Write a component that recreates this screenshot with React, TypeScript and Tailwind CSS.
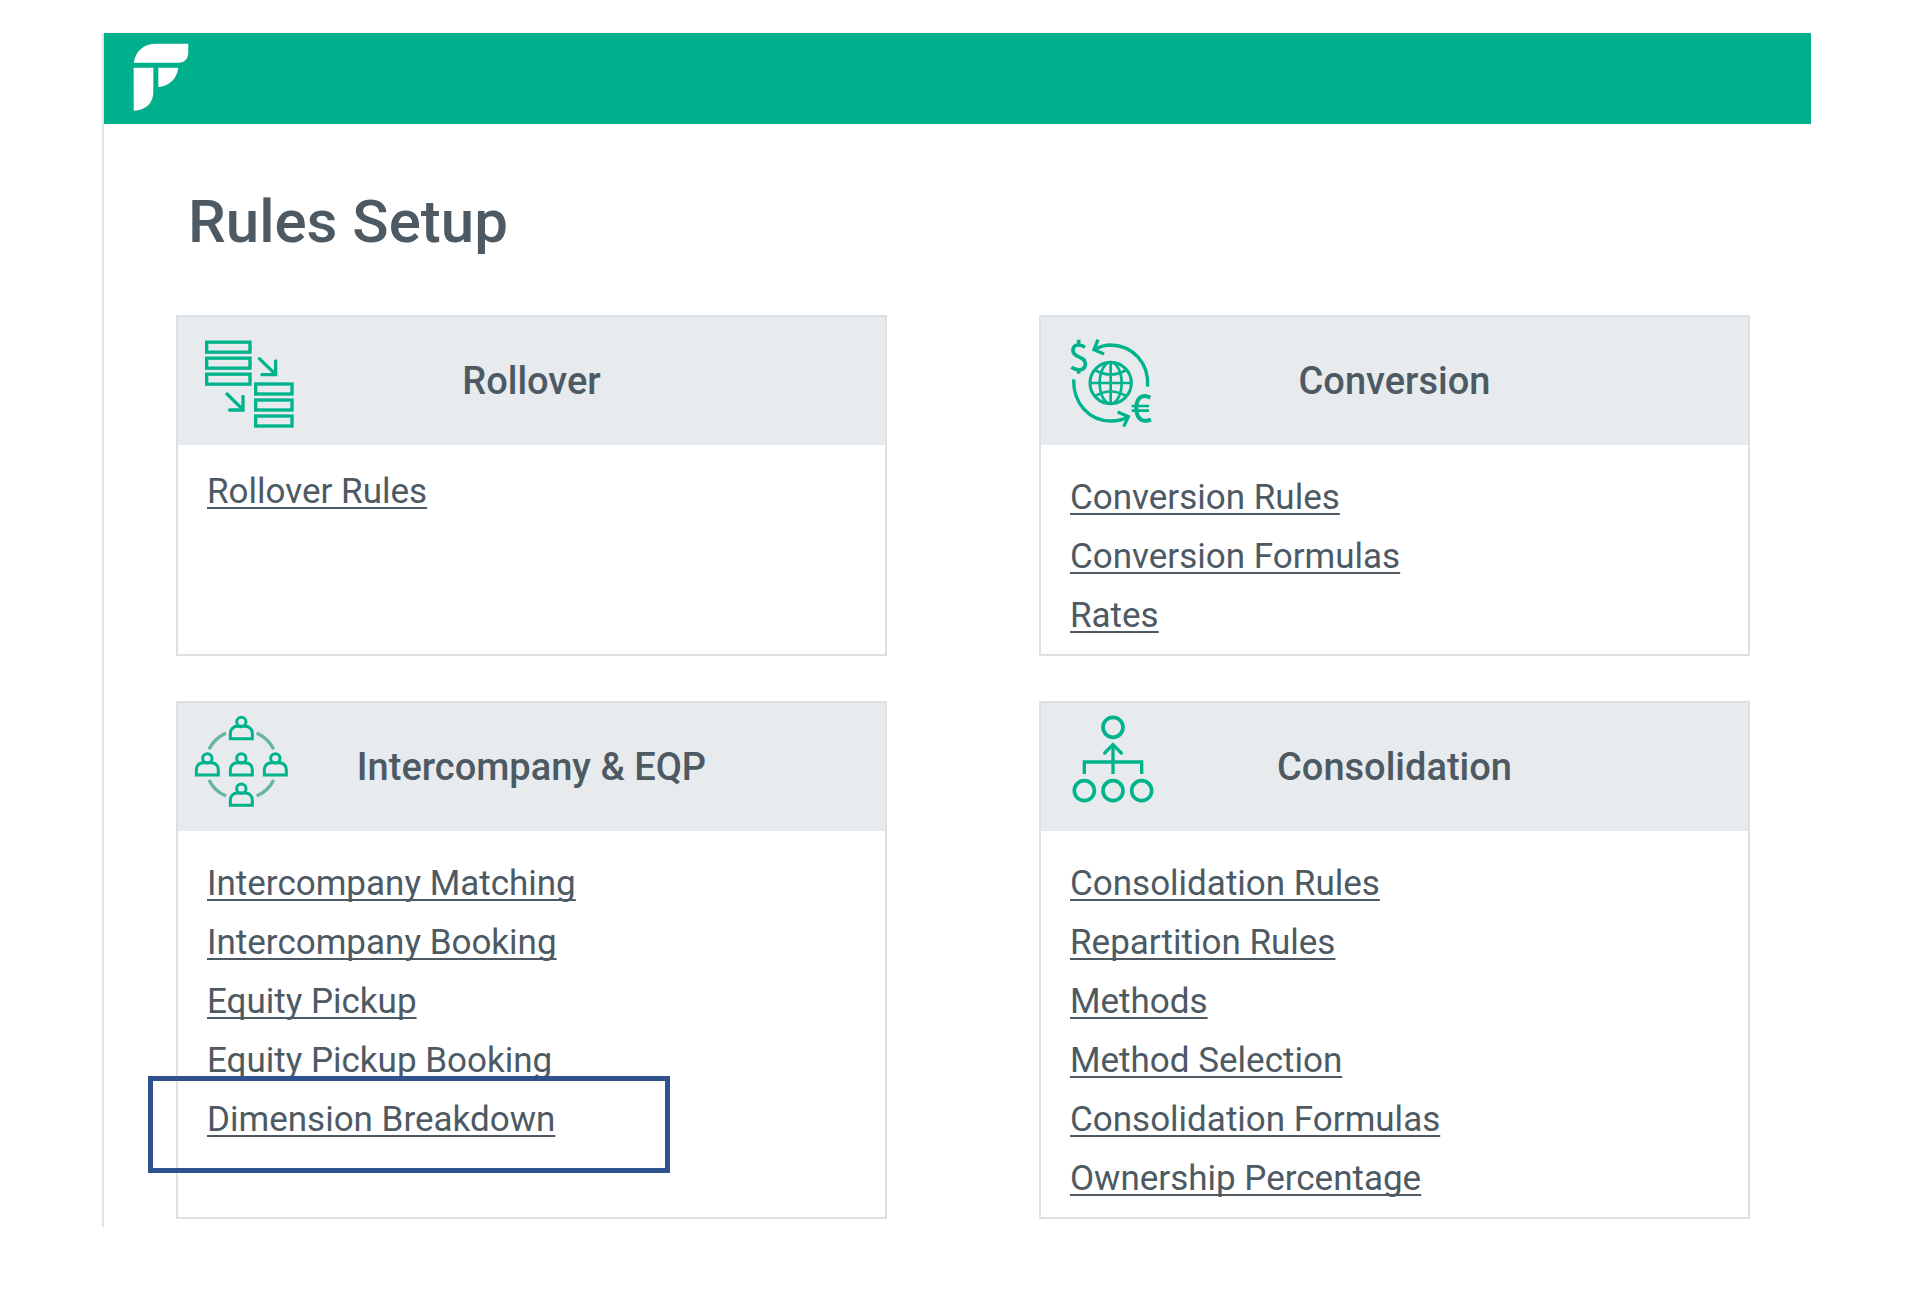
import type { ReactNode } from 'react';

const GREEN = '#00b38c';

function Logo() {
  return (
    <svg viewBox="0 0 168 204" className="h-[68px] w-[56px]" fill="#fff" aria-label="Home" role="img">
      <path d="M2 59 C8 22 34 2 68 2 H166 V26 C166 46 156 59 136 59 Z" />
      <path d="M2 74 H61 V146 C61 180 38 202 2 203 Z" />
      <path d="M76 74 H136 C132 106 108 130 76 132 Z" />
    </svg>
  );
}

function IconFrame({ viewBox, children }: { viewBox: string; children: ReactNode }) {
  return (
    <svg
      viewBox={viewBox}
      className="h-[128px] w-[126px] shrink-0"
      fill="none"
      stroke={GREEN}
      strokeWidth={10}
      aria-hidden="true"
    >
      {children}
    </svg>
  );
}

function RolloverIcon() {
  return (
    <IconFrame viewBox="24 22 378 384">
      {[97.5, 145.5, 193.5].map((y) => (
        <rect key={y} x={110} y={y} width={130} height={30} />
      ))}
      {[223, 271, 319].map((y) => (
        <rect key={y} x={257} y={y} width={109} height={30} />
      ))}
      <g strokeLinecap="round">
        <path d="M268 147 L317 194 M317 154 V195 H276" />
        <path d="M171 253 L219 300 M219 260 V301 H179" />
      </g>
    </IconFrame>
  );
}

function ConversionIcon() {
  return (
    <IconFrame viewBox="21 22 378 384">
      <path d="M341 231 C345 160 297 108 231 106 C214 106 197 111 181 120" />
      <path d="M192 90 L180 120 L210 133" />
      <path d="M119 209 C117 281 166 333 230 334 C249 334 268 330 283 322" />
      <path d="M251 307 L283 321 L269 351" />
      <circle cx={230} cy={220} r={62} strokeWidth={9} />
      <g strokeWidth={8}>
        <ellipse cx={230} cy={220} rx={33} ry={62} />
        <path d="M230 158 V282 M168 220 H292" />
        <path d="M183 181 Q230 208 277 181 M183 259 Q230 232 277 259" />
      </g>
      <path
        d="M153 113 C144 105 117 99 117 123 C117 145 154 138 154 162 C154 187 125 182 112 173 M134 90 V104 M134 178 V192"
        strokeWidth={11}
      />
      <path d="M349 264 C318 249 307 272 307 296 C307 322 320 342 351 330" strokeWidth={12} />
      <path d="M293 289 H345 M293 303 H345" strokeWidth={8} />
    </IconFrame>
  );
}

function IntercompanyIcon() {
  const people = [
    [214, 79],
    [112, 188],
    [214, 188],
    [316, 188],
    [214, 279],
  ];
  return (
    <IconFrame viewBox="24 22 378 384">
      <g stroke="#66b59f">
        <path d="M117 161 C128 138 145 123 168 112" />
        <path d="M260 112 C283 123 300 138 311 161" />
        <path d="M117 253 C128 276 145 291 168 301" />
        <path d="M260 301 C283 291 300 276 311 253" />
      </g>
      {people.map(([x, y]) => (
        <g key={`${x}-${y}`} transform={`translate(${x} ${y})`} strokeWidth={9}>
          <circle r={14} />
          <path d="M-33 50 V34 C-33 22 -24 13 -12 13 H12 C24 13 33 22 33 34 V50 Z" />
        </g>
      ))}
    </IconFrame>
  );
}

function ConsolidationIcon() {
  return (
    <IconFrame viewBox="21 22 378 384">
      <g strokeWidth={11}>
        <circle cx={237} cy={95} r={30} />
        <circle cx={151} cy={285} r={30} />
        <circle cx={237} cy={285} r={30} />
        <circle cx={323} cy={285} r={30} />
      </g>
      <path d="M151 235 V199 H323 V235 M237 235 V149" />
      <path d="M212 172 L237 147 L262 172" strokeLinecap="round" />
    </IconFrame>
  );
}

type Section = {
  title: string;
  icon: ReactNode;
  links: string[];
  compact?: boolean;
  highlighted?: string;
};

const sections: Section[] = [
  { title: 'Rollover', icon: <RolloverIcon />, links: ['Rollover Rules'], compact: true },
  {
    title: 'Conversion',
    icon: <ConversionIcon />,
    links: ['Conversion Rules', 'Conversion Formulas', 'Rates'],
  },
  {
    title: 'Intercompany & EQP',
    icon: <IntercompanyIcon />,
    links: [
      'Intercompany Matching',
      'Intercompany Booking',
      'Equity Pickup',
      'Equity Pickup Booking',
      'Dimension Breakdown',
    ],
    highlighted: 'Dimension Breakdown',
  },
  {
    title: 'Consolidation',
    icon: <ConsolidationIcon />,
    links: [
      'Consolidation Rules',
      'Repartition Rules',
      'Methods',
      'Method Selection',
      'Consolidation Formulas',
      'Ownership Percentage',
    ],
  },
];

function Card({ title, icon, links, compact, highlighted }: Section) {
  return (
    <section className="border-2 border-[#dce1e4]">
      <div className="grid grid-cols-[1fr_auto_1fr] items-center bg-[#e7ebee]">
        {icon}
        <h2 className="text-[38px] leading-[40px] font-medium">{title}</h2>
      </div>
      <ul className={compact ? 'px-[29px] pt-[17px] pb-2' : 'px-[29px] pt-[23px] pb-[9px]'}>
        {links.map((link) => (
          <li key={link} className="relative text-[35px] leading-[59px]">
            <a href="#" className="underline decoration-2 underline-offset-4 [text-decoration-skip-ink:none]">
              {link}
            </a>
            {link === highlighted && (
              <span className="pointer-events-none absolute -top-[14px] -left-[59px] h-[97px] w-[522px] border-[5px] border-[#2f528f]" />
            )}
          </li>
        ))}
      </ul>
    </section>
  );
}

export default function App() {
  return (
    <div className="min-h-screen bg-white pt-[33px] pr-[108px] pl-[102px] font-['Roboto',sans-serif] text-[#4d5963]">
      <div className="border-l-2 border-[#e2e2e2] pb-2">
        <header className="flex h-[91px] items-start bg-[#00b08c] px-[29px] pt-[10px]">
          <Logo />
        </header>
        <main className="pt-[62px] pr-[61px] pl-[72px]">
          <h1 className="pl-3 text-[60px] leading-[72px] font-medium">Rules Setup</h1>
          <div className="mt-[57px] grid grid-cols-2 gap-x-[152px] gap-y-[45px]">
            {sections.map((section) => (
              <Card key={section.title} {...section} />
            ))}
          </div>
        </main>
      </div>
    </div>
  );
}
